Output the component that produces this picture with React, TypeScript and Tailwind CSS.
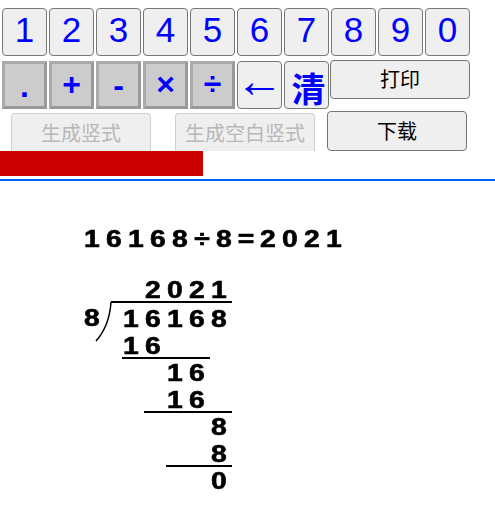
const CJK = "font-['Liberation_Sans','Noto_Sans_CJK_SC',sans-serif]";

function Key({ label, dark, className = "text-[35px] pb-[5px]" }: { label: string; dark?: boolean; className?: string }) {
  const base = dark
    ? "bg-[#cccccc] border-[3px] border-[#aaaaaa] border-b-[#999999] border-r-[#999999] font-bold"
    : "bg-[#efefef] border border-[#767676] rounded-[4px]";
  return (
    <button className={`w-[45px] h-[48px] shrink-0 flex items-center justify-center text-[#0000ff] leading-none ${CJK} ${base} ${className}`}>
      {label}
    </button>
  );
}

function Digit({ d }: { d: string }) {
  return <span className="w-[22px] shrink-0 text-center inline-block scale-x-[1.18] -translate-x-[2px]">{d}</span>;
}

function Row({ offset, text, className = "" }: { offset: number; text: string; className?: string }) {
  return (
    <div className={`flex h-[27px] items-center ${className}`}>
      {offset > 0 && <div style={{ width: offset * 22 }} className="shrink-0" />}
      {text.split("").map((c, i) => (
        <Digit key={i} d={c} />
      ))}
    </div>
  );
}

function Rule({ left, width }: { left: number; width: number }) {
  return <div style={{ marginLeft: left, width }} className="h-[2px] bg-black -mt-[2px] relative" />;
}

export default function App() {
  return (
    <div className={`w-[495px] h-[505px] bg-white overflow-hidden ${CJK}`}>
      <div className="flex gap-[2px] pl-[2px] pt-[8px]">
        {"1234567890".split("").map((n) => (
          <Key key={n} label={n} />
        ))}
      </div>

      <div className="flex gap-[2px] pl-[2px] mt-[5px] h-[48px]">
        <Key label="." dark className="text-[32px] items-end pb-[4px]" />
        <Key label="+" dark className="text-[32px] pb-[3px]" />
        <Key label="-" dark className="text-[32px] pb-[1px]" />
        <Key label="×" dark className="text-[32px] pb-[3px]" />
        <Key label="÷" dark className="text-[32px] pb-[3px]" />
        <Key label="←" className="text-[48px] pb-[8px]" />
        <Key label="清" className="text-[34px] font-bold items-end pb-[1px] pl-[4px]" />
        <button className="ml-[-1px] -mt-[1px] pt-[1px] w-[140px] h-[39px] bg-[#efefef] border border-[#767676] rounded-[4px] text-[20px] text-black">
          打印
        </button>
      </div>

      <div className="flex mt-[2px] h-[40px]">
        <button disabled className="ml-[11px] mt-[2px] pt-[2px] w-[140px] h-[38px] bg-[#efefef] border border-b-0 border-[#d0d0d0] rounded-t-[4px] text-[20px] text-[#b8b8b8]">
          生成竖式
        </button>
        <button disabled className="ml-[24px] mt-[2px] pt-[2px] w-[140px] h-[38px] bg-[#efefef] border border-b-0 border-[#d0d0d0] rounded-t-[4px] text-[20px] text-[#b8b8b8]">
          生成空白竖式
        </button>
        <button className="ml-[12px] pt-[2px] w-[140px] h-[40px] bg-[#efefef] border border-[#767676] rounded-[4px] text-[20px] text-black">
          下载
        </button>
      </div>

      <div className="w-[203px] h-[25px] bg-[#cc0000]" />
      <div className="mt-[3px] h-[2px] bg-[#0066ee]" />

      <div className="pl-[83px] pt-[44px] flex h-[95px] items-start text-[24px] font-bold text-black leading-[27px] blur-[0.3px] [-webkit-text-stroke:0.6px_black]">
        {"16168÷8=2021".split("").map((c, i) => (
          <Digit key={i} d={c} />
        ))}
      </div>

      <div className="flex text-[24px] font-bold text-black leading-none blur-[0.3px] [-webkit-text-stroke:0.6px_black]">
        <div className="w-[41px] shrink-0 ml-[81px] pt-[30px] relative">
          <span className="block w-[22px] text-center scale-x-[1.18]">8</span>
          <svg className="absolute left-[14px] top-[25px]" width="17" height="41" viewBox="0 0 17 41" fill="none">
            <path d="M16 1 C 15 16, 10 30, 1 40" stroke="#000" strokeWidth="1.5" />
          </svg>
        </div>
        <div className="flex flex-col">
          <Row offset={1} text="2021" />
          <Rule left={-11} width={121} />
          <Row offset={0} text="16168" className="mt-[2px]" />
          <Row offset={0} text="16" />
          <Rule left={0} width={88} />
          <Row offset={2} text="16" />
          <Row offset={2} text="16" />
          <Rule left={22} width={88} />
          <Row offset={4} text="8" />
          <Row offset={4} text="8" />
          <Rule left={44} width={66} />
          <Row offset={4} text="0" />
        </div>
      </div>
    </div>
  );
}
